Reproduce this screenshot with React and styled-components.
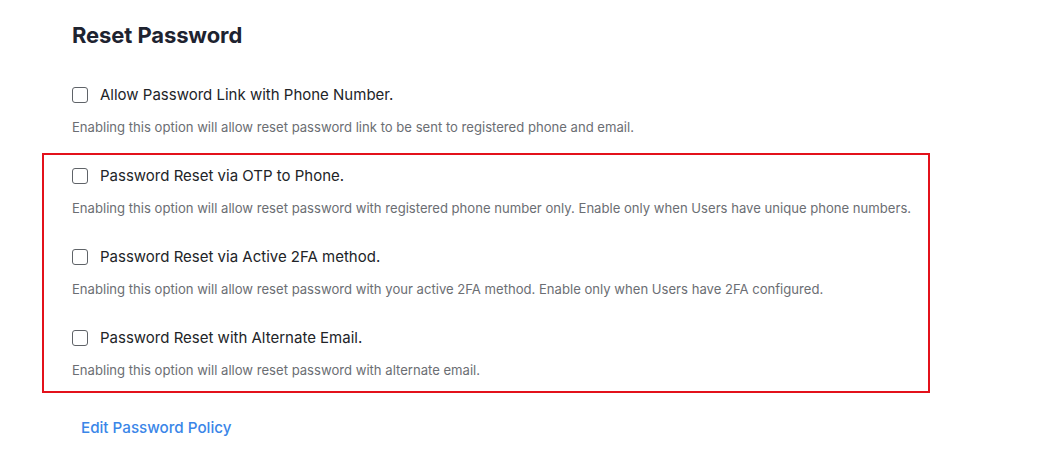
import React from 'react';
import styled, { createGlobalStyle } from 'styled-components';

const GlobalStyle = createGlobalStyle`
  body {
    margin: 0;
    background: #ffffff;
    font-family: "Inter", "Noto Sans", sans-serif;
  }
`;

const options = [
    {
        id: 'link',
        label: 'Allow Password Link with Phone Number.',
        help: 'Enabling this option will allow reset password link to be sent to registered phone and email.'
    },
    {
        id: 'otp',
        label: 'Password Reset via OTP to Phone.',
        help: 'Enabling this option will allow reset password with registered phone number only. Enable only when Users have unique phone numbers.',
        flagged: true
    },
    {
        id: '2fa',
        label: 'Password Reset via Active 2FA method.',
        help: 'Enabling this option will allow reset password with your active 2FA method. Enable only when Users have 2FA configured.',
        flagged: true
    },
    {
        id: 'alt',
        label: 'Password Reset with Alternate Email.',
        help: 'Enabling this option will allow reset password with alternate email.',
        flagged: true
    }
];

const Option = ({ id, label, help }) => (
    <Item>
        <Row htmlFor={id}>
            <Check id={id} type="checkbox" />
            <Label>{label}</Label>
        </Row>
        <Help>{help}</Help>
    </Item>
);

export default function App() {
    const plain = options.filter(o => !o.flagged);
    const flagged = options.filter(o => o.flagged);

    return (
        <Page>
            <GlobalStyle />
            <Title>Reset Password</Title>
            <List>
                {plain.map(o => <Option key={o.id} {...o} />)}
            </List>
            <Highlight>
                <List>
                    {flagged.map(o => <Option key={o.id} {...o} />)}
                </List>
            </Highlight>
            <PolicyLink href="#">Edit Password Policy</PolicyLink>
        </Page>
    );
}

const Page = styled.div`
    padding: 20px 0 0 72px;
    display: flex;
    flex-direction: column;
    align-items: flex-start;
`;

const Title = styled.h2`
    margin: 0 0 35px 0;
    font-size: 22px;
    line-height: 30px;
    font-weight: 700;
    color: #1e2330;
    letter-spacing: -0.1px;
`;

const List = styled.div`
    display: flex;
    flex-direction: column;
    gap: 30px;
`;

const Item = styled.div`
    display: flex;
    flex-direction: column;
    gap: 13px;
`;

const Row = styled.label`
    display: flex;
    align-items: center;
    gap: 12px;
    height: 20px;
    cursor: pointer;
`;

const Check = styled.input`
    appearance: none;
    margin: 0;
    width: 16px;
    height: 16px;
    border: 1.5px solid #5f6368;
    border-radius: 3px;
    box-sizing: border-box;
    background: #fff;
`;

const Label = styled.span`
    font-size: 15px;
    line-height: 20px;
    color: #222428;
`;

const Help = styled.p`
    margin: 0;
    font-size: 13.1px;
    line-height: 18px;
    color: #6b6e73;
`;

const Highlight = styled.section`
    margin: 17px 0 0 -30px;
    width: 888px;
    box-sizing: border-box;
    border: 2px solid #e3111b;
    padding: 11px 0 12px 28px;
`;

const PolicyLink = styled.a`
    margin: 25px 0 0 9px;
    font-size: 15.2px;
    line-height: 20px;
    font-weight: 500;
    color: #3a86e8;
    text-decoration: none;
`;
